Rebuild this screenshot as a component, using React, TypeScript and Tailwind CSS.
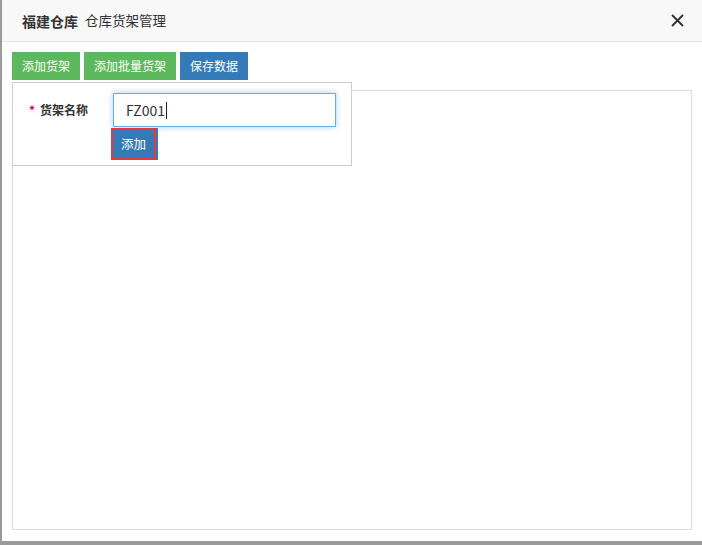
import React from "react";

const font = { fontFamily: '"Noto Sans CJK SC", "Noto Sans", sans-serif' };

export default function App() {
  return (
    <div className="w-[702px] h-[545px] bg-[#9b9b9b] pl-[2px] pb-[4px] overflow-hidden" style={font}>
      <div className="relative w-[700px] h-[541px] bg-white flex flex-col">
        <div className="h-[42px] shrink-0 bg-[#f8f8f8] border-b border-[#e5e5e5] flex items-center pl-[20px] pr-[18px]">
          <span className="text-[14px] font-bold text-[#333] leading-none">福建仓库</span>
          <span className="text-[13.5px] text-[#333] ml-[7px] leading-none">仓库货架管理</span>
          <button className="ml-auto w-[14px] h-[14px] flex items-center justify-center text-[#333]">
            <svg width="13" height="13" viewBox="0 0 13 13">
              <path d="M1 1 L12 12 M12 1 L1 12" stroke="#2f2f3a" strokeWidth="1.8" />
            </svg>
          </button>
        </div>
        <div className="flex-1 flex flex-col pt-[10px] px-[10px] pb-[11px] gap-[10px]">
          <div className="flex gap-[4px] h-[28px]">
            <button className="h-[28px] px-[10px] bg-[#5cb85c] text-white text-[12px] leading-none">添加货架</button>
            <button className="h-[28px] px-[10px] bg-[#5cb85c] text-white text-[12px] leading-none">添加批量货架</button>
            <button className="h-[28px] px-[10px] bg-[#337ab7] text-white text-[12px] leading-none">保存数据</button>
          </div>
          <div className="flex-1 border border-[#dddddd]"></div>
        </div>
        <div className="absolute left-[10px] top-[82px] w-[340px] h-[84px] bg-white border border-[#cccccc]">
          <div className="flex items-center mt-[10px]">
            <div className="w-[100px] flex items-center pl-[16px] text-[12px] font-bold text-[#333]">
              <span className="text-[#e4004f] mr-[5px] text-[12px]">*</span>
              货架名称
            </div>
            <div className="w-[223px] h-[34px] border border-[#66afe9] shadow-[0_0_6px_rgba(102,175,233,0.6)] flex items-center pl-[12px] text-[14px] text-[#333]">
              FZ001<span className="inline-block w-[1px] h-[17px] bg-[#222] ml-[1px]"></span>
            </div>
          </div>
          <div className="ml-[98px] mt-[1px] flex">
            <button className="relative w-[45px] h-[32px] bg-[#337ab7] border-2 border-[#e8383d] text-white text-[12.5px] leading-none shadow-[2px_0_0_#337ab7]">添加</button>
          </div>
        </div>
      </div>
    </div>
  );
}
